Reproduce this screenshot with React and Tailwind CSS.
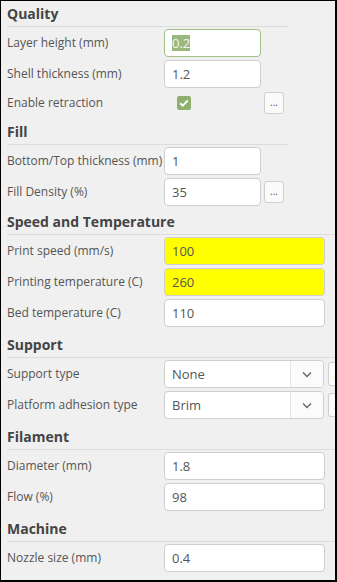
import React from "react";

const font = { fontFamily: '"Open Sans", "Noto Sans", sans-serif' };

function Heading({ children, h, wide }) {
  return (
    <div
      className={`ml-[6px] ${wide ? "w-[328px]" : "w-[281px]"} ${h} box-border flex items-end pb-[2px] border-b border-[#dcdcdc] shrink-0`}
    >
      <span className="text-[14px] leading-[20px] font-bold text-[#444]">{children}</span>
    </div>
  );
}

function Label({ children }) {
  return (
    <div className="w-[157px] shrink-0 text-[12px] leading-[16px] text-[#555] whitespace-nowrap">
      {children}
    </div>
  );
}

function DotsBtn() {
  return (
    <div className="ml-[3px] w-[20px] h-[22px] shrink-0 box-border border border-[#cfcfcf] rounded-[3px] bg-[#fafafa] flex items-center justify-center text-[10px] leading-none text-[#555] pb-[2px]">
      ...
    </div>
  );
}

function Input({ value, wide, yellow, focused }) {
  const w = wide ? "w-[161px]" : "w-[97px]";
  const bg = yellow ? "bg-[#ffff00]" : "bg-white";
  const border = focused ? "border-[#a3c08a]" : "border-[#cfcfcf]";
  return (
    <div
      className={`${w} h-[28px] shrink-0 box-border border ${border} ${bg} rounded-[4px] flex items-center pl-[7px] text-[13px] text-[#555]`}
    >
      {focused ? (
        <span className="bg-[#9ab87d] text-[#f4f4f4] leading-[16px]">{value}</span>
      ) : (
        <span className="leading-[16px]">{value}</span>
      )}
    </div>
  );
}

function Row({ label, children, h = "h-[28px]", first }) {
  return (
    <div className={`${first ? "mt-[2px]" : "mt-[3px]"} ml-[6px] flex items-center ${h} shrink-0`}>
      <Label>{label}</Label>
      {children}
    </div>
  );
}

function Select({ value }) {
  return (
    <>
      <div className="w-[160px] h-[28px] shrink-0 box-border border border-[#cfcfcf] bg-white rounded-[4px] flex items-stretch text-[13px] text-[#555]">
        <div className="flex-1 flex items-center pl-[7px] leading-[16px]">{value}</div>
        <div className="w-[33px] border-l border-[#e6e6e6] bg-[#fbfbfb] rounded-r-[4px] flex items-center justify-center">
          <svg width="10" height="7" viewBox="0 0 10 7" fill="none">
            <path d="M1 1.5 L5 5.5 L9 1.5" stroke="#666" strokeWidth="1.4" />
          </svg>
        </div>
      </div>
      <div className="ml-[4px] w-[20px] h-[24px] shrink-0 box-border border border-[#cfcfcf] rounded-[3px] bg-[#fafafa] flex items-center justify-center text-[10px] text-[#555]">
        ...
      </div>
    </>
  );
}

export default function App() {
  return (
    <div
      style={font}
      className="w-[337px] h-[582px] box-border border-t border-l border-r-2 border-b-2 border-black bg-[#f0f0f0] overflow-hidden flex flex-col"
    >
      <Heading h="h-[26px]">Quality</Heading>
      <Row label="Layer height (mm)" first>
        <Input value="0.2" focused />
      </Row>
      <Row label="Shell thickness (mm)">
        <Input value="1.2" />
      </Row>
      <Row label="Enable retraction" h="h-[23px]">
        <div className="w-[97px] shrink-0 flex items-center">
          <div className="ml-[13px] mt-[1px] w-[14px] h-[14px] rounded-[2px] bg-[#8db06c] flex items-center justify-center">
            <svg width="10" height="8" viewBox="0 0 10 8" fill="none">
              <path d="M1.2 4.2 L3.8 6.6 L8.8 1.4" stroke="white" strokeWidth="1.9" />
            </svg>
          </div>
        </div>
        <DotsBtn />
      </Row>

      <Heading h="h-[31px]">Fill</Heading>
      <Row label="Bottom/Top thickness (mm)" first>
        <Input value="1" />
      </Row>
      <Row label="Fill Density (%)">
        <Input value="35" />
        <DotsBtn />
      </Row>

      <Heading h="h-[29px]" wide>Speed and Temperature</Heading>
      <Row label="Print speed (mm/s)" first>
        <Input value="100" wide yellow />
      </Row>
      <Row label="Printing temperature (C)">
        <Input value="260" wide yellow />
      </Row>
      <Row label="Bed temperature (C)">
        <Input value="110" wide />
      </Row>

      <Heading h="h-[31px]" wide>Support</Heading>
      <Row label="Support type" first>
        <Select value="None" />
      </Row>
      <Row label="Platform adhesion type">
        <Select value="Brim" />
      </Row>

      <Heading h="h-[31px]" wide>Filament</Heading>
      <Row label="Diameter (mm)" first>
        <Input value="1.8" wide />
      </Row>
      <Row label="Flow (%)">
        <Input value="98" wide />
      </Row>

      <Heading h="h-[31px]" wide>Machine</Heading>
      <Row label="Nozzle size (mm)" first>
        <Input value="0.4" wide />
      </Row>
    </div>
  );
}
